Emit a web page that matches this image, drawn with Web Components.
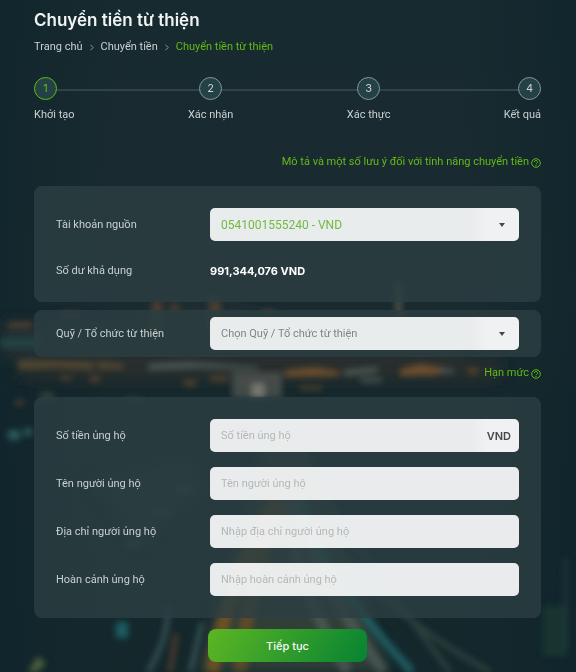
<!DOCTYPE html>
<html lang="vi">
<head>
<meta charset="utf-8">
<meta name="viewport" content="width=device-width, initial-scale=1">
<title>Chuyển tiền từ thiện</title>
<style>
  body {
    margin: 0;
    background: #14272d;
    color: #c9d1d2;
    font: 11px/16px Roboto, "Liberation Sans", sans-serif;
    --heading-font: Inter, "Liberation Sans", sans-serif;
    --green: #62bb14;
  }
</style>
</head>
<body>
<transfer-page>
  <bread-crumbs items="Trang chủ|Chuyển tiền|Chuyển tiền từ thiện"></bread-crumbs>
  <step-list steps="Khởi tạo|Xác nhận|Xác thực|Kết quả" current="1"></step-list>
  <help-link class="intro">Mô tả và một số lưu ý đối với tính năng chuyển tiền</help-link>
  <form-card>
    <select-field label="Tài khoản nguồn" option="0541001555240 - VND" filled></select-field>
    <balance-row label="Số dư khả dụng">991,344,076 VND</balance-row>
  </form-card>
  <form-card compact>
    <select-field label="Quỹ / Tổ chức từ thiện" option="Chọn Quỹ / Tổ chức từ thiện"></select-field>
  </form-card>
  <help-link class="limit">Hạn mức</help-link>
  <form-card>
    <text-field label="Số tiền ủng hộ" placeholder="Số tiền ủng hộ" unit="VND"></text-field>
    <text-field label="Tên người ủng hộ" placeholder="Tên người ủng hộ"></text-field>
    <text-field label="Địa chỉ người ủng hộ" placeholder="Nhập địa chỉ người ủng hộ"></text-field>
    <text-field label="Hoàn cảnh ủng hộ" placeholder="Nhập hoàn cảnh ủng hộ"></text-field>
  </form-card>
  <submit-button>Tiếp tục</submit-button>
</transfer-page>

<script>
class BaseElement extends HTMLElement {
  constructor() {
    super();
    this.attachShadow({ mode: "open" });
  }

  connectedCallback() {
    this.shadowRoot.innerHTML = this.render();
  }

  list(name) {
    return this.getAttribute(name).split("|");
  }
}

// Blurred city at night, with light trails on the road
class CityBackdrop extends BaseElement {
  render() {
    return `
      <style>
        :host { position: fixed; inset: 0; z-index: -1; }
        svg { display: block; width: 100%; height: 100%; }
      </style>
      <svg viewBox="0 0 576 672" preserveAspectRatio="none" aria-hidden="true">
        <defs>
          <linearGradient id="sky" x1="0" y1="0" x2="0" y2="1">
            <stop offset="0" stop-color="#172a30"/>
            <stop offset=".45" stop-color="#1b2c31"/>
            <stop offset=".6" stop-color="#16292d"/>
            <stop offset="1" stop-color="#14282c"/>
          </linearGradient>
          <linearGradient id="side">
            <stop offset="0" stop-color="#10252c" stop-opacity=".8"/>
            <stop offset=".2" stop-color="#10252c" stop-opacity="0"/>
            <stop offset=".8" stop-color="#10252c" stop-opacity="0"/>
            <stop offset="1" stop-color="#10252c" stop-opacity=".8"/>
          </linearGradient>
          <filter id="soft" x="-20%" y="-20%" width="140%" height="140%"><feGaussianBlur stdDeviation="3"/></filter>
          <filter id="haze" x="-20%" y="-20%" width="140%" height="140%"><feGaussianBlur stdDeviation="7"/></filter>
        </defs>
        <rect width="576" height="672" fill="url(#sky)"/>
        <rect width="576" height="672" fill="url(#side)"/>
        <g filter="url(#haze)">
          <path d="M0 322h130l30-14h60l60 10h120l60 16v26H0z" fill="#2a3535" opacity=".7"/>
          <path d="M20 358h480v22H20z" fill="#39342c" opacity=".5"/>
          <path d="M90 480l100-30 20 40-70 60z" fill="#2e453b" opacity=".4"/>
          <path d="M268 430l-70 242h190L300 430z" fill="#39433c" opacity=".8"/>
        </g>
        <g filter="url(#soft)" opacity=".65">
          <path d="M152 300h10v30h-10zM208 296h12v36h-12z" fill="#4a4338"/>
          <path d="M396 282h5v36h-5z" fill="#806f5c"/>
          <path d="M0 338h40v10H0z" fill="#254f50"/>
          <path d="M8 322h24v6H8zM60 312h20v5H60zM152 303h10v8h-10zM170 304h9v7h-9zM212 303h9v8h-9zM262 310h12v5h-12z" fill="#6b4a30"/>
          <path d="M18 360l76 2v8l-40-2-36 2zM98 361l26 3v5H98z" fill="#6b5434"/>
          <path d="M148 364l40-2 70 5v3l-60-2-50 2z" fill="#607170"/>
          <path d="M285 370l30-3 24 4v5l-54 1zM400 369l20-5 26 4-8 7-38 1z" fill="#94602d"/>
          <path d="M344 370l34-3v5l-34 4zM360 378h22v4h-22zM440 369h14v4h-14z" fill="#667570"/>
          <path d="M468 368h10v6h-10zM184 380h12v6h-12zM90 376h10v6H90zM60 376h12v4H60zM210 376h18v5h-18zM300 386h22v4h-22z" fill="#755030"/>
          <path d="M232 372h50v26h-50z" fill="#5b5d58"/>
          <path d="M252 384h12v14h-12z" fill="#aba498"/>
          <path d="M40 392h14v8H40zM124 398h20v4h-20z" fill="#43523f"/>
          <path d="M8 430h12v10H8zM24 428h8v8h-8z" fill="#3a7777"/>
          <path d="M15 400h9v5h-9z" fill="#704a35"/>
          <path d="M150 508h20v7h-20zM176 486h16v8h-16zM125 540h14v8h-14z" fill="#3b5544"/>
          <path d="M116 622h12v16h-12z" fill="#237a80"/>
          <path d="M38 656l8 8-10 8h-8z" fill="#708049"/>
          <path d="M543 606h24v50h-24z" fill="#1e3d35"/>
          <path d="M564 558h3v90h-3z" fill="#2d4a4a"/>
        </g>
        <g fill="none" filter="url(#soft)" opacity=".8">
          <path d="M168 606q0 34-20 66M202 622l-12 50" stroke="#49666a" stroke-width="4"/>
          <path d="M278 500q-50 80-66 172" stroke="#7c5522" stroke-width="14"/>
          <path d="M282 500q-34 80-42 172" stroke="#7c5522" stroke-width="14" opacity=".7"/>
          <path d="M176 634l-6 38" stroke="#72452a" stroke-width="4"/>
          <path d="M288 500q8 90 60 172M294 500q28 90 90 172" stroke="#56635f" stroke-width="11" opacity=".8"/>
          <path d="M300 500q22 76 112 172" stroke="#236b70" stroke-width="8"/>
          <path d="M320 530q60 80 170 142M300 450q20 50 150 222" stroke="#344842" stroke-width="5"/>
        </g>
      </svg>`;
  }
}

class TransferPage extends BaseElement {
  render() {
    return `
      <style>
        :host { display: block; }
        main {
          box-sizing: border-box;
          min-height: 100vh;
          padding: 8px 35px 10px 34px;
          display: flex;
          flex-direction: column;
        }
        h1 {
          margin: 0 0 7px;
          color: #f1f4f4;
          font-family: var(--heading-font);
          font-size: 17px;
          font-weight: 600;
          line-height: 24px;
        }
        ::slotted(step-list) { margin: 22px 0 31px; }
        ::slotted(.intro) { margin-bottom: 16px; }
        ::slotted(form-card[compact]) { margin: 8px 0; }
        ::slotted(.limit) { margin-bottom: 16px; }
        ::slotted(submit-button) { margin-top: 11px; }
      </style>
      <city-backdrop></city-backdrop>
      <main>
        <h1>Chuyển tiền từ thiện</h1>
        <slot></slot>
      </main>`;
  }
}

class BreadCrumbs extends BaseElement {
  render() {
    const items = this.list("items");
    const arrow = `<svg width="4" height="7" viewBox="0 0 4 7" aria-hidden="true"><path d="M.5.8 3.2 3.5.5 6.2"/></svg>`;
    return `
      <style>
        :host { display: block; }
        nav { display: flex; align-items: center; gap: 7px; }
        a { color: inherit; text-decoration: none; }
        a:last-child { color: var(--green); }
        svg { fill: none; stroke: #8c989a; }
      </style>
      <nav>${items.map((text) => `<a href="#">${text}</a>`).join(arrow)}</nav>`;
  }
}

class StepList extends BaseElement {
  render() {
    const current = Number(this.getAttribute("current"));
    const steps = this.list("steps").map((text, i) => `
      <li ${i + 1 === current ? 'aria-current="step"' : ""}>
        <span class="number">${i + 1}</span>
        <span>${text}</span>
      </li>`);
    return `
      <style>
        :host { display: block; }
        ol {
          display: flex;
          justify-content: space-between;
          margin: 0;
          padding: 0;
          list-style: none;
          background: linear-gradient(#304347, #304347) 0 12px / 100% 2px no-repeat;
        }
        li { display: flex; flex-direction: column; align-items: center; gap: 7px; }
        li:first-child { align-items: flex-start; }
        li:last-child { align-items: flex-end; }
        .number {
          box-sizing: border-box;
          width: 23px;
          height: 23px;
          border: 1px solid #829799;
          border-radius: 50%;
          background: #244245;
          font-family: var(--heading-font);
          line-height: 21px;
          text-align: center;
        }
        [aria-current] .number { border-color: var(--green); color: var(--green); }
      </style>
      <ol>${steps.join("")}</ol>`;
  }
}

class HelpLink extends BaseElement {
  render() {
    return `
      <style>
        :host { display: flex; justify-content: flex-end; }
        a {
          display: flex;
          align-items: center;
          gap: 2px;
          color: var(--green);
          text-decoration: none;
        }
        svg { fill: none; stroke: currentColor; margin-top: 2px; }
      </style>
      <a href="#">
        <slot></slot>
        <svg width="10" height="10" viewBox="0 0 10 10" aria-hidden="true">
          <circle cx="5" cy="5" r="4.3"/>
          <path d="M3.4 4a1.6 1.5 0 1 1 2.3 1.3Q5 5.6 5 6.2M5 7v1"/>
        </svg>
      </a>`;
  }
}

class FormCard extends BaseElement {
  render() {
    return `
      <style>
        :host {
          display: flex;
          flex-direction: column;
          gap: 15px;
          padding: 22px;
          border-radius: 8px;
          background: rgba(44, 62, 66, 0.8);
        }
        :host([compact]) { padding: 7px 22px; }
      </style>
      <slot></slot>`;
  }
}

const rowStyle = `
  :host {
    display: grid;
    grid-template-columns: 154px 1fr;
    align-items: center;
  }
  .control {
    display: grid;
    grid-template-columns: 1fr auto;
    align-items: center;
    height: 33px;
    border-radius: 5px;
    background: rgba(255, 255, 255, 0.9);
    overflow: hidden;
  }
  .control.end {
    background: linear-gradient(to left, #f0f1f3 32px, rgba(255, 255, 255, 0.9) 48px);
  }
  input, select {
    grid-area: 1 / 1 / 2 / 3;
    box-sizing: border-box;
    width: 100%;
    height: 100%;
    margin: 0;
    padding: 0 11px;
    border: 0;
    background: none;
    appearance: none;
    color: #444;
    font: inherit;
  }
`;

class SelectField extends BaseElement {
  render() {
    return `
      <style>
        ${rowStyle}
        select { color: #808485; }
        :host([filled]) select { color: #72b944; font-size: 12px; }
        svg { grid-area: 1 / 2; margin-right: 14px; fill: #46494b; pointer-events: none; }
      </style>
      <label for="field">${this.getAttribute("label")}</label>
      <div class="control end">
        <select id="field"><option>${this.getAttribute("option")}</option></select>
        <svg width="6" height="4" viewBox="0 0 6 4" aria-hidden="true"><path d="M0 0h6L3 4z"/></svg>
      </div>`;
  }
}

class TextField extends BaseElement {
  render() {
    const unit = this.getAttribute("unit");
    return `
      <style>
        ${rowStyle}
        input::placeholder { color: #b5b8b9; opacity: 1; }
        b {
          grid-area: 1 / 2;
          margin-right: 8px;
          color: #45494b;
          font-family: var(--heading-font);
          font-weight: 600;
        }
      </style>
      <label for="field">${this.getAttribute("label")}</label>
      <div class="control ${unit ? "end" : ""}">
        <input id="field" type="text" placeholder="${this.getAttribute("placeholder")}">
        ${unit ? `<b>${unit}</b>` : ""}
      </div>`;
  }
}

class BalanceRow extends BaseElement {
  render() {
    return `
      <style>
        ${rowStyle}
        :host { padding: 7px 0 1px; }
        output { color: #fff; font-family: var(--heading-font); font-weight: 700; }
      </style>
      <span>${this.getAttribute("label")}</span>
      <output><slot></slot></output>`;
  }
}

class SubmitButton extends BaseElement {
  render() {
    return `
      <style>
        :host { display: flex; justify-content: center; }
        button {
          min-width: 159px;
          height: 33px;
          padding: 0 16px;
          border: 0;
          border-radius: 8px;
          background: linear-gradient(120deg, #5cb623, #078333);
          color: #f4faf4;
          font: 500 11px/16px var(--heading-font);
        }
      </style>
      <button type="button"><slot></slot></button>`;
  }
}

customElements.define("city-backdrop", CityBackdrop);
customElements.define("transfer-page", TransferPage);
customElements.define("bread-crumbs", BreadCrumbs);
customElements.define("step-list", StepList);
customElements.define("help-link", HelpLink);
customElements.define("form-card", FormCard);
customElements.define("select-field", SelectField);
customElements.define("text-field", TextField);
customElements.define("balance-row", BalanceRow);
customElements.define("submit-button", SubmitButton);
</script>
</body>
</html>
